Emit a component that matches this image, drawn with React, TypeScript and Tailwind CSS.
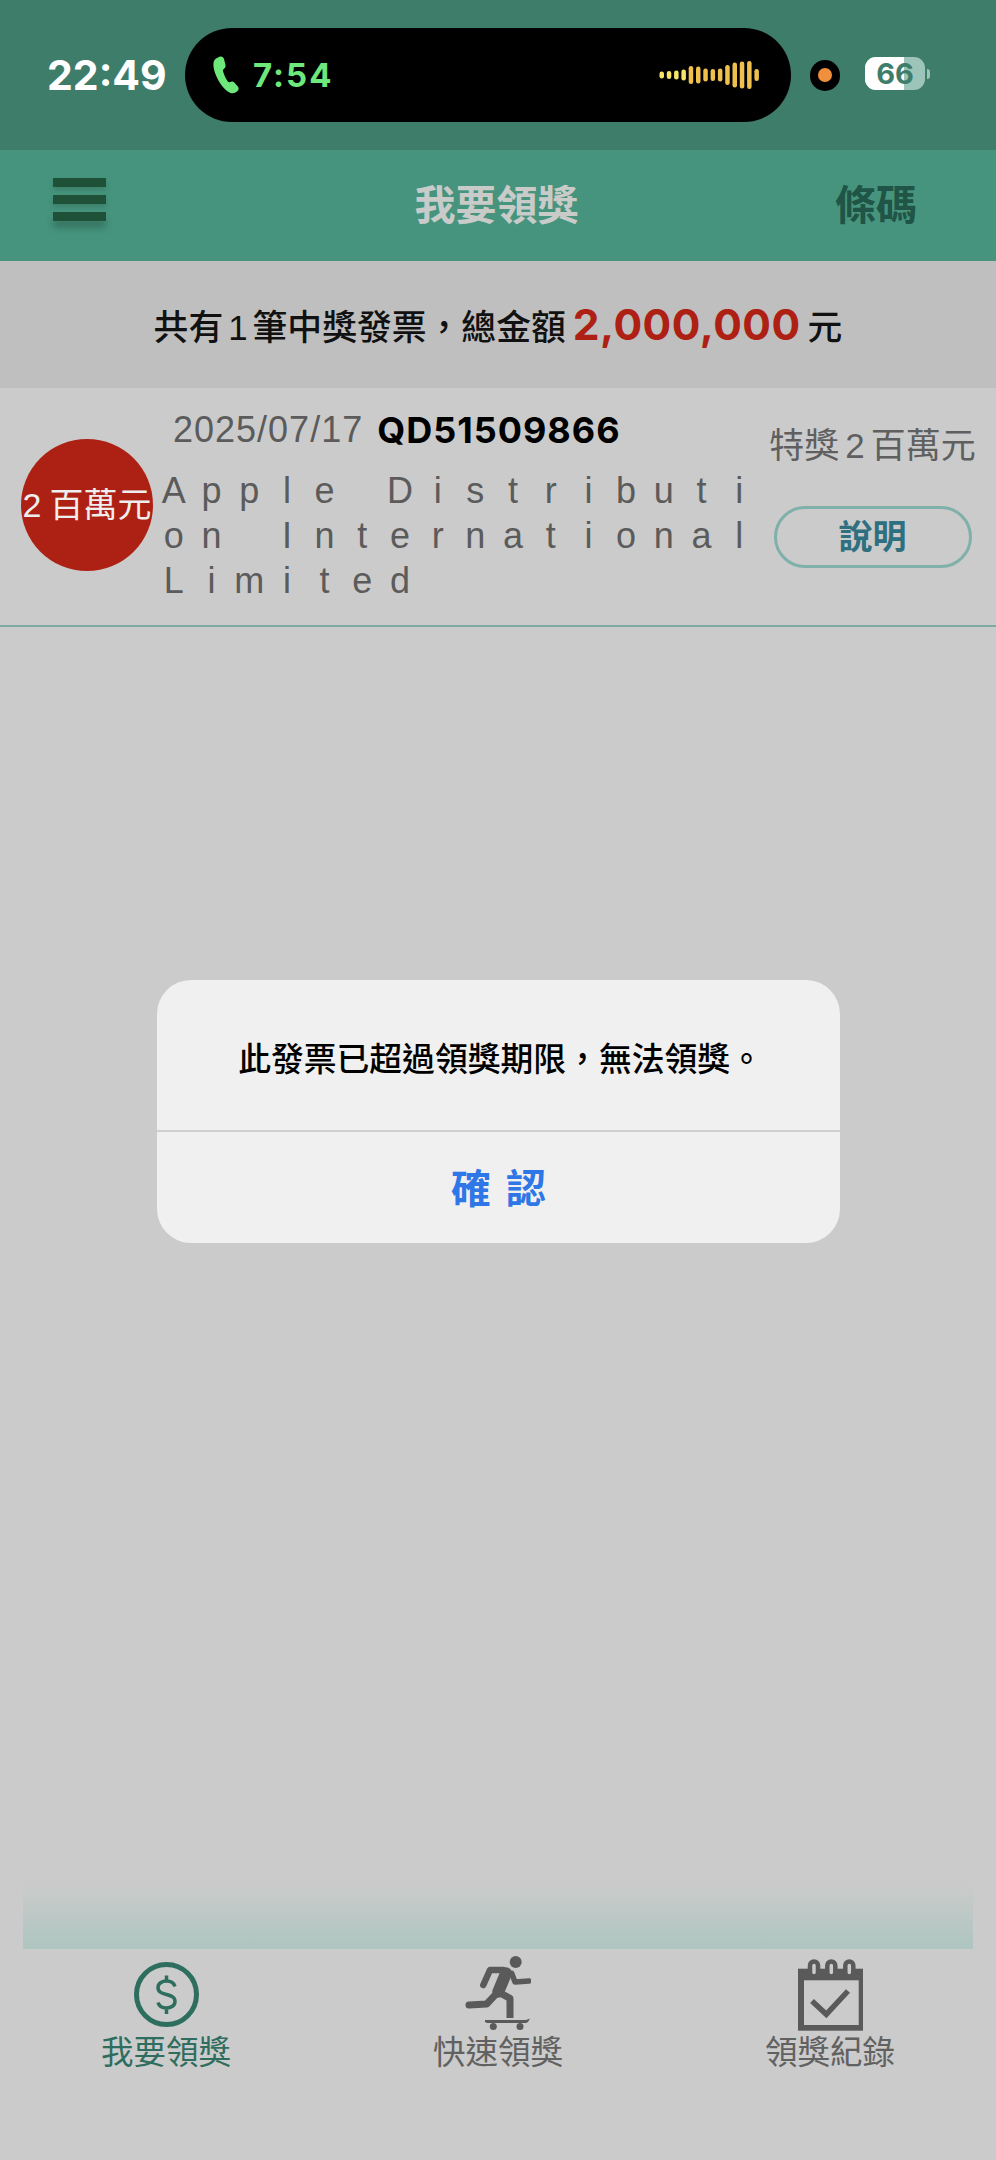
import React from 'react'

const FONT = "font-['Liberation_Sans','Noto_Sans_CJK_TC',sans-serif]"

const waveBars = [7, 8, 9, 11, 18, 17, 13, 12, 13, 20, 25, 27, 28, 12]

// wraps mid word in the original, every letter sits in an equal cell
const sellerLines = ['Apple Distributi', 'on International', 'Limited']

const PhoneIcon = () => (
  <svg width="28" height="38" viewBox="0 0 28 38" className="shrink-0">
    <path
      d="M6 1c2.500-1 4.500 0 5 2l1.500 6c.4 1.700-.4 3-1.700 4-1 .7-1 1.500-.7 2.500 1 3.500 2.600 7 4.700 10 .6.8 1.300 1 2.300.6 1.500-.7 3-.8 4.200.4l3.500 4c1.300 1.500 1 3.500-.5 4.800-2 1.700-4.800 2.700-7.300 1.400C11 34 6.500 27 3.500 20.500 1 15 -.5 9 1 5c.7-1.800 3-3.200 5-4z"
      fill="#6ee87a"
    />
  </svg>
)

const Waveform = () => (
  <svg width="100" height="30" viewBox="0 0 100 30" className="shrink-0">
    {waveBars.map((h, i) => (
      <rect key={i} x={i * 7.3 + 0.5} y={15 - h / 2} width="4.500" height={h} rx="2.200" fill={i < 4 ? '#f7e56a' : '#efc04e'} />
    ))}
  </svg>
)

const StatusBar = () => (
  <div className="h-[150px] bg-[#3f7d6b] flex items-center pl-[47px]">
    <span className="font-['Inter'] text-[41px] font-bold text-white leading-none w-[138px] shrink-0">22:49</span>
    <div className="w-[606px] h-[94px] rounded-full bg-black flex items-center justify-between pl-[28px] pr-[32px] shrink-0">
      <div className="flex items-center gap-[12px]">
        <PhoneIcon />
        <span className="font-['Inter'] text-[33px] font-bold text-[#6ee87a] tracking-[2px] leading-none">7:54</span>
      </div>
      <Waveform />
    </div>
    <div className="ml-[19px] w-[30px] h-[31px] rounded-full bg-black flex items-center justify-center shrink-0">
      <div className="w-[14px] h-[14px] rounded-full bg-[#f0903c]" />
    </div>
    <div className="ml-[25px] mb-[3px] relative w-[60px] h-[33px] rounded-[11px] overflow-hidden bg-[#9cc4b8] shrink-0">
      <div className="w-[39px] h-full bg-white" />
      <span className="font-['Inter'] absolute inset-0 flex items-center justify-center text-[29px] font-bold text-[#3f7d6b] leading-none">66</span>
    </div>
    <div className="ml-[2px] mb-[3px] w-[3px] h-[10px] rounded-r-full bg-[#9cc4b8]" />
  </div>
)

const Header = () => (
  <div className="h-[111px] bg-[#46947d] flex items-center justify-between pl-[53px] pr-[79px]">
    <div className="flex flex-col gap-[8px] w-[53px] mb-[12px]">
      <div className="h-[9px] bg-[#1e5138] shadow-[0_3px_5px_rgba(0,0,0,0.15)]" />
      <div className="h-[9px] bg-[#1e5138] shadow-[0_3px_5px_rgba(0,0,0,0.15)]" />
      <div className="h-[9px] bg-[#1e5138] shadow-[0_7px_7px_rgba(0,0,0,0.22)]" />
    </div>
    <span className="text-[41px] font-bold text-[#c9cbc9] leading-none ml-[52px] pt-[2px]">我要領獎</span>
    <span className="text-[41px] font-bold text-[#1f5446] leading-none pt-[2px]">條碼</span>
  </div>
)

const Summary = () => (
  <div className="h-[127px] bg-[#bfbfbf] flex items-center justify-center pt-[2px]">
    <p className="text-[34.800px] font-medium text-[#111] leading-none flex items-baseline">
      <span>共有</span>
      <span className="mx-[5px]">1</span>
      <span>筆中獎發票，總金額</span>
      <span className="font-['Inter'] text-[42.500px] font-bold text-[#ae1f14] tracking-[0.5px] mx-[7px]">2,000,000</span>
      <span>元</span>
    </p>
  </div>
)

const PrizeRow = () => (
  <div className="h-[239px] border-b-[2px] border-[#7eaaa3] flex items-start pl-[21px] pr-[24px]">
    <div className="w-[132px] h-[132px] rounded-full bg-[#ad2114] flex items-center justify-center shrink-0 mt-[51px]">
      <span className="text-[34px] text-[#eee] leading-none whitespace-nowrap flex items-baseline gap-[8px]">
        <span>2</span>
        <span>百萬元</span>
      </span>
    </div>
    <div className="w-[612px] shrink-0 ml-[8px] pt-[24px]">
      <div className="flex items-center pl-[12px] text-[36px] leading-none">
        <span className="text-[#5b5b5b] tracking-[1px]">2025/07/17</span>
        <span className="font-['Inter'] font-bold text-black tracking-[1px] ml-[14px]">QD51509866</span>
      </div>
      <div className="mt-[20px] -ml-[6px] text-[36px] leading-[45px] text-[#5b5b5b]">
        {sellerLines.map((line) => (
          <p key={line} className="flex">
            {line.split('').map((ch, i) => (
              <span key={i} className="w-[37.700px] text-center">
                {ch === ' ' ? '\u00A0' : ch}
              </span>
            ))}
          </p>
        ))}
      </div>
    </div>
    <div className="ml-auto w-[199px] flex flex-col items-center pt-[40px]">
      <span className="text-[35px] text-[#5f5f5f] leading-none whitespace-nowrap flex items-baseline">
        <span>特獎</span>
        <span className="mx-[6px]">2</span>
        <span>百萬元</span>
      </span>
      <div className="mt-[43px] w-[198px] h-[62px] rounded-full border-[3px] border-[#7fb0a9] flex items-center justify-center">
        <span className="text-[34px] font-bold text-[#2e6f80] leading-none">說明</span>
      </div>
    </div>
  </div>
)

const DollarIcon = () => (
  <svg width="65" height="65" viewBox="0 0 65 65" className="mb-[4px]">
    <circle cx="32.500" cy="32.500" r="30" fill="none" stroke="#2e6e5e" strokeWidth="5" />
    <path
      d="M41 24.500c-1-3.500-4-5.500-8.500-5.500s-8.500 2.500-8.500 6.500c0 4.500 3.500 5.500 8.500 7s8.500 2.500 8.500 7c0 4-4 6.500-8.500 6.500s-7.500-2-8.500-5.500M32.500 13.500v5.500M32.500 46.500v5.500"
      fill="none"
      stroke="#2e6e5e"
      strokeWidth="3.500"
    />
  </svg>
)

const SkaterIcon = () => (
  <svg width="66" height="76" viewBox="0 0 66 76">
    <g fill="none" stroke="#5a5a5a" strokeLinecap="round" strokeLinejoin="round">
      <path d="M38 15H25l-6.700 15" strokeWidth="6.500" />
      <path d="M46.700 18.300L50 27l14-1" strokeWidth="5.500" />
      <path d="M41 18.300L33.300 36.700" strokeWidth="12" />
      <path d="M33.300 36.700L21.700 49 4 50" strokeWidth="7" />
      <path d="M33.300 37L45 43.300V63" strokeWidth="7" strokeLinecap="butt" />
    </g>
    <circle cx="50.700" cy="7" r="6" fill="#5a5a5a" />
    <path d="M20 65h41l4-1.500-2 3.500-2 1H22l-2-1z" fill="#5a5a5a" />
    <circle cx="28.300" cy="71.500" r="3.500" fill="#5a5a5a" />
    <circle cx="55" cy="71.500" r="3.500" fill="#5a5a5a" />
  </svg>
)

const CalendarIcon = () => (
  <svg width="65" height="73" viewBox="0 0 65 73">
    <rect x="0" y="10.700" width="65" height="62" fill="#5a5a5a" />
    <rect x="6" y="22.300" width="54.700" height="44.700" fill="#cbcbcb" />
    {[16, 33.300, 51.300].map((c) => (
      <rect key={c} x={c - 4} y="3.500" width="8" height="15" rx="4" fill="#cbcbcb" stroke="#5a5a5a" strokeWidth="4.500" />
    ))}
    <path d="M14 43l14.300 13.300L50 33" fill="none" stroke="#5a5a5a" strokeWidth="5.500" />
  </svg>
)

type TabProps = {
  icon: React.ReactNode
  label: string
  active?: boolean
}

const Tab = ({ icon, label, active }: TabProps) => (
  <div className="flex flex-col items-center w-[332px]">
    <div className="h-[76px] flex items-end justify-center">{icon}</div>
    <span className={`mt-[6px] text-[32.500px] leading-none ${active ? 'text-[#2f6d5e]' : 'text-[#616161]'}`}>{label}</span>
  </div>
)

const Dialog = () => (
  <div className="absolute left-[157px] top-[980px] w-[683px] h-[263px] rounded-[34px] bg-[#f0f0f0] flex flex-col">
    <div className="h-[152px] border-b-[2px] border-[#cfcfcf] flex items-center justify-center">
      <span className="text-[32.800px] font-medium text-black leading-none pt-[10px] ml-[4px]">此發票已超過領獎期限，無法領獎。</span>
    </div>
    <div className="flex-1 flex items-center justify-center">
      <span className="text-[40px] font-bold text-[#2f76e6] leading-none tracking-[15px] ml-[15px] pt-[2px]">確認</span>
    </div>
  </div>
)

const App = () => {
  return (
    <div className={`relative w-[996px] h-[2160px] overflow-hidden bg-[#cbcbcb] flex flex-col ${FONT}`}>
      <StatusBar />
      <Header />
      <Summary />
      <PrizeRow />
      <div className="flex-1" />
      <div className="mx-[23px] h-[66px] bg-gradient-to-b from-[#cbcbcb] to-[#aec5c0]" />
      <div className="h-[211px] flex justify-start pt-[6px]">
        <Tab icon={<DollarIcon />} label="我要領獎" active />
        <Tab icon={<SkaterIcon />} label="快速領獎" />
        <Tab icon={<CalendarIcon />} label="領獎紀錄" />
      </div>
      <Dialog />
    </div>
  )
}

export default App
